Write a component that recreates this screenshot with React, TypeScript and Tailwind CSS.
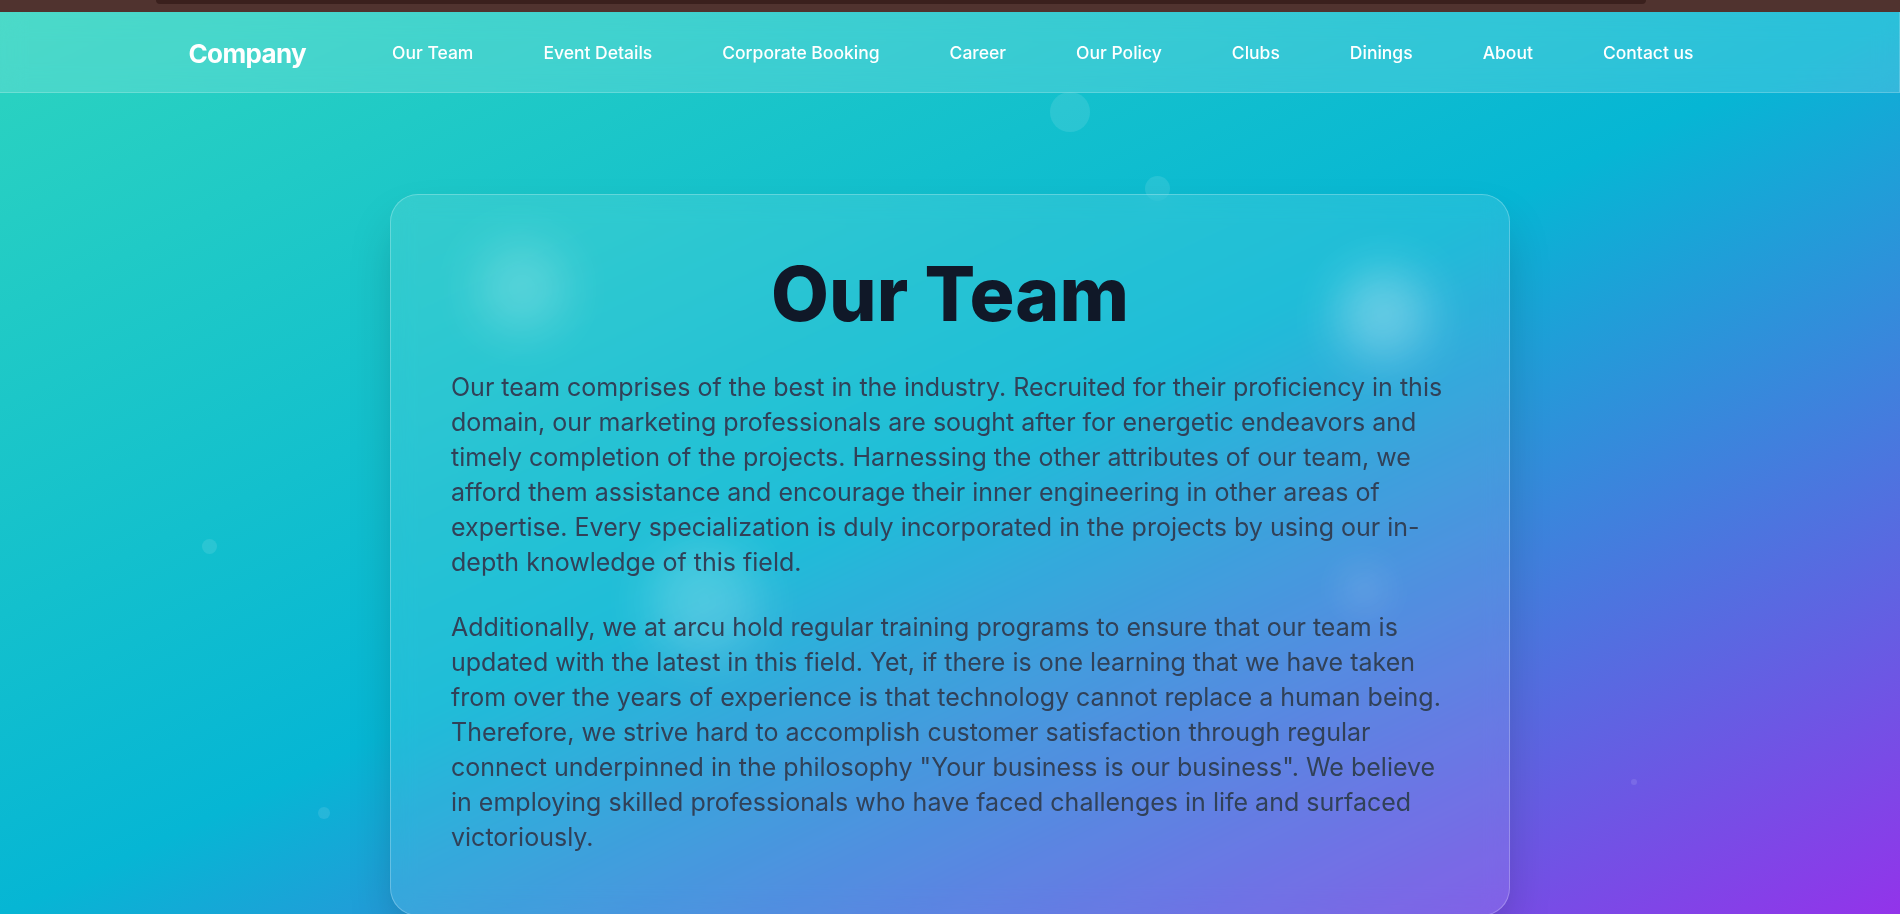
const links = [
  'Our Team',
  'Event Details',
  'Corporate Booking',
  'Career',
  'Our Policy',
  'Clubs',
  'Dinings',
  'About',
  'Contact us',
];

// floating dots on the page background
const dots = [
  { c: 'left-[1050px] top-[80px] w-[40px] h-[40px]' },
  { c: 'left-[1145px] top-[164px] w-[25px] h-[25px]' },
  { c: 'left-[202px] top-[527px] w-[15px] h-[15px]' },
  { c: 'left-[318px] top-[795px] w-[12px] h-[12px]' },
  { c: 'left-[1631px] top-[767px] w-[6px] h-[6px]' },
];

function Navbar() {
  return (
    <nav className="relative z-20 h-[81px] border-b border-r border-white/20 bg-white/15 backdrop-blur-md">
      <div className="mx-auto flex h-full max-w-[1522px] items-center pt-[3px]">
        <a className="whitespace-nowrap text-[26px] font-bold tracking-tight text-white">Company</a>
        <ul className="ml-[86px] flex items-center gap-[70px]">
          {links.map((l) => (
            <li key={l} className="whitespace-nowrap">
              <a className="text-[17.5px] font-medium text-white">{l}</a>
            </li>
          ))}
        </ul>
      </div>
    </nav>
  );
}

function TeamCard() {
  return (
    <div className="relative mx-auto w-[1120px] overflow-hidden rounded-[28px] border border-white/25 bg-white/10 px-[60px] pt-[60px] pb-[60px] shadow-2xl backdrop-blur-md">
      {/* soft glow blobs */}
      <div className="absolute left-[86px] top-[48px] h-[90px] w-[90px] rounded-full bg-white/20 blur-xl" />
      <div className="absolute left-[947px] top-[74px] h-[90px] w-[90px] rounded-full bg-white/30 blur-xl" />
      <div className="absolute left-[258px] top-[351px] h-[110px] w-[110px] rounded-full bg-white/20 blur-xl" />
      <div className="absolute left-[950px] top-[371px] h-[46px] w-[46px] rounded-full bg-white/10 blur-lg" />

      <div className="relative">
        <h1 className="mb-[39px] pt-[1px] text-center text-[75px] leading-none font-extrabold text-gray-900">
          Our Team
        </h1>
        <p className="mb-[30px] text-[25px] leading-[35px] text-slate-700">
          Our team comprises of the best in the industry. Recruited for their proficiency in this
          domain, our marketing professionals are sought after for energetic endeavors and timely
          completion of the projects. Harnessing the other attributes of our team, we afford them
          assistance and encourage their inner engineering in other areas of expertise. Every
          specialization is duly incorporated in the projects by using our in-depth knowledge of
          this field.
        </p>
        <p className="text-[25px] leading-[35px] text-slate-700">
          Additionally, we at arcu hold regular training programs to ensure that our team is updated
          with the latest in this field. Yet, if there is one learning that we have taken from over
          the years of experience is that technology cannot replace a human being. Therefore, we
          strive hard to accomplish customer satisfaction through regular connect underpinned in the
          philosophy "Your business is our business". We believe in employing skilled professionals
          who have faced challenges in life and surfaced victoriously.
        </p>
      </div>
    </div>
  );
}

export default function App() {
  return (
    <div className="flex h-screen flex-col overflow-hidden font-['Inter','Noto_Sans',sans-serif]">
      {/* window strip */}
      <div className="h-[12px] shrink-0 bg-[#50332f]">
        <div className="ml-[156px] h-[4px] w-[1490px] rounded-b-full bg-[#3a201d]" />
      </div>

      <div className="relative flex-1 bg-[linear-gradient(to_bottom_right,#2dd4bf,#06b6d4,#9333ea)]">
        {dots.map((d, i) => (
          <div key={i} className={`absolute rounded-full bg-white/10 ${d.c}`} />
        ))}
        <Navbar />
        <main className="relative z-10 pt-[101px]">
          <TeamCard />
        </main>
      </div>
    </div>
  );
}
